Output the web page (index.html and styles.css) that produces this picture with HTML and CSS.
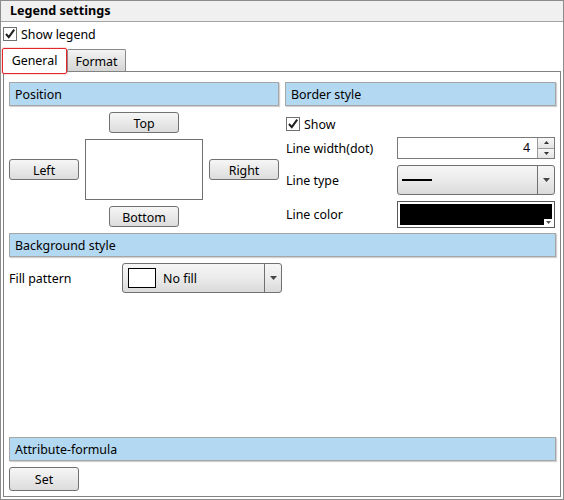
FILE: index.html
```html
<!DOCTYPE html>
<html>
<head>
<meta charset="utf-8">
<link rel="stylesheet" href="styles.css">
</head>
<body>
<div class="window">
  <div class="title">Legend settings</div>
  <div class="check show-legend">
    <svg class="cb" width="14" height="14" viewBox="0 0 14 14"><rect x="0.5" y="0.5" width="13" height="13" fill="#fff" stroke="#707070"/><path d="M3 7 L5.8 10.2 L11.2 2.6" fill="none" stroke="#1e1e1e" stroke-width="2"/></svg>
    <span>Show legend</span>
  </div>
  <div class="tabs">
    <div class="tab selected">General</div>
    <div class="tab">Format</div>
  </div>
  <div class="panel">
    <div class="columns">
      <section class="col">
        <div class="hdr">Position</div>
        <div class="pos">
          <div class="btn">Top</div>
          <div class="pos-mid">
            <div class="btn">Left</div>
            <div class="preview"></div>
            <div class="btn">Right</div>
          </div>
          <div class="btn">Bottom</div>
        </div>
      </section>
      <section class="col col-right">
        <div class="hdr">Border style</div>
        <div class="check show-row">
          <svg class="cb" width="14" height="14" viewBox="0 0 14 14"><rect x="0.5" y="0.5" width="13" height="13" fill="#fff" stroke="#707070"/><path d="M3 7 L5.8 10.2 L11.2 2.6" fill="none" stroke="#1e1e1e" stroke-width="2"/></svg>
          <span>Show</span>
        </div>
        <div class="form">
          <div class="lbl">Line width(dot)</div>
          <div class="spin">
            <div class="spin-val">4</div>
            <div class="spin-btns">
              <div class="spin-btn"><svg width="5" height="3" viewBox="0 0 5 3"><path d="M0 3h5L2.5 0z" fill="#333"/></svg></div>
              <div class="spin-btn"><svg width="5" height="3" viewBox="0 0 5 3"><path d="M0 0h5L2.5 3z" fill="#333"/></svg></div>
            </div>
          </div>
          <div class="lbl">Line type</div>
          <div class="drop drop-line">
            <div class="drop-body"><div class="line-sample"></div></div>
            <div class="drop-arrow"><svg width="7" height="4" viewBox="0 0 7 4"><path d="M0 0h7L3.5 4z" fill="#444"/></svg></div>
          </div>
          <div class="lbl">Line color</div>
          <div class="color">
            <div class="color-fill"></div>
            <div class="color-arrow"><svg width="5" height="3" viewBox="0 0 5 3"><path d="M0 0h5L2.5 3z" fill="#555"/></svg></div>
          </div>
        </div>
      </section>
    </div>
    <div class="hdr hdr-bg">Background style</div>
    <div class="fill-row">
      <div class="lbl fill-lbl">Fill pattern</div>
      <div class="drop drop-fill">
        <div class="drop-body"><div class="swatch"></div><span class="fill-text">No fill</span></div>
        <div class="drop-arrow"><svg width="7" height="4" viewBox="0 0 7 4"><path d="M0 0h7L3.5 4z" fill="#444"/></svg></div>
      </div>
    </div>
    <div class="hdr hdr-attr">Attribute-formula</div>
    <div class="btn btn-set">Set</div>
  </div>
</div>
</body>
</html>
```
FILE: styles.css
```css
* { box-sizing: border-box; }
html, body { margin: 0; padding: 0; background: #fff; }
body {
  font-family: "Noto Sans", "DejaVu Sans", sans-serif;
  font-size: 12.4px;
  color: #000;
}
.window {
  width: 564px;
  height: 500px;
  border: 1px solid #8c8c8c;
  display: flex;
  flex-direction: column;
}
.title {
  flex: none;
  height: 21px;
  background: #f0f0f0;
  border-bottom: 1px solid #a3a3a3;
  font-weight: bold;
  font-size: 12.6px;
  padding-left: 9px;
  line-height: 20px;
}
.check { display: flex; align-items: center; gap: 4px; }
.cb { flex: none; display: block; }
.show-legend { flex: none; height: 20px; margin-top: 2px; padding-left: 2px; }
.tabs {
  flex: none;
  display: flex;
  align-items: flex-end;
  height: 23px;
  margin-top: 4px;
  padding-left: 1px;
}
.tab {
  height: 22px;
  width: 59px;
  display: flex;
  align-items: center;
  justify-content: center;
  border: 1px solid #8a8a8a;
  border-bottom: none;
  border-radius: 2px 2px 0 0;
  background: linear-gradient(#f3f3f3, #d5d5d5);
  padding-top: 1px;
}
.tab.selected {
  position: relative;
  z-index: 1;
  width: 65px;
  height: 26px;
  margin-bottom: -3px;
  border: 1px solid #e3262b;
  border-radius: 2px;
  background: #fff;
  padding-top: 0;
  padding-bottom: 2px;
  box-shadow: 0 0 0 1px rgba(240, 80, 80, 0.18);
}
.panel {
  flex: 1;
  margin: 0 2px 2px 2px;
  border: 1px solid #828282;
  padding: 10px 4px 5px 5px;
  display: flex;
  flex-direction: column;
}
.columns {
  display: grid;
  grid-template-columns: 270px 1fr;
  column-gap: 6px;
}
.hdr {
  flex: none;
  height: 24px;
  line-height: 23px;
  padding-left: 5px;
  background: #b3d8f1;
  border: 1px solid #a6a6a6;
  box-shadow: 1px 1px 1px rgba(0, 0, 0, 0.18);
}
.pos {
  display: flex;
  flex-direction: column;
  align-items: center;
  gap: 6px;
  margin-top: 6px;
}
.pos-mid {
  display: flex;
  align-items: center;
  gap: 6px;
  width: 100%;
}
.btn {
  width: 70px;
  height: 21px;
  border: 1px solid #707070;
  border-radius: 3px;
  background: linear-gradient(#f6f6f6, #dcdcdc);
  display: flex;
  align-items: center;
  justify-content: center;
  flex: none;
  padding-top: 1px;
}
.preview {
  width: 118px;
  height: 61px;
  border: 1px solid #707070;
  background: #fff;
}
.col-right { padding-left: 0; }
.show-row { height: 18px; margin-top: 9px; padding-left: 1px; }
.form {
  display: grid;
  grid-template-columns: 112px 158px;
  grid-template-rows: 22px 30px 27px;
  row-gap: 6px;
  margin-top: 4px;
  align-items: center;
}
.lbl { padding-left: 1px; white-space: nowrap; }
.spin {
  height: 22px;
  display: flex;
  border: 1px solid #7a7a7a;
  background: #fff;
}
.spin-val { flex: 1; text-align: right; padding-right: 7px; line-height: 20px; }
.spin-btns {
  width: 17px;
  border-left: 1px solid #9a9a9a;
  display: flex;
  flex-direction: column;
}
.spin-btn {
  flex: 1;
  display: flex;
  align-items: center;
  justify-content: center;
  background: linear-gradient(#f7f7f7, #e3e3e3);
}
.spin-btn + .spin-btn { border-top: 1px solid #9a9a9a; }
.spin-btn svg { display: block; }
.drop {
  display: flex;
  border: 1px solid #707070;
  border-radius: 3px;
  background: linear-gradient(#f6f6f6 0%, #ebebeb 50%, #dadada 100%);
}
.drop-line { height: 30px; }
.drop-body { flex: 1; display: flex; align-items: center; padding-left: 4px; }
.drop-arrow {
  width: 17px;
  border-left: 1px solid #707070;
  display: flex;
  align-items: center;
  justify-content: center;
}
.drop-arrow svg { display: block; }
.line-sample { width: 30px; height: 2px; background: #000; }
.color {
  height: 27px;
  border: 1px solid #5a5a5a;
  padding: 2px;
  background: #fff;
  position: relative;
}
.color-fill { width: 100%; height: 100%; background: #000; }
.color-arrow {
  position: absolute;
  right: 2px;
  bottom: 2px;
  width: 8px;
  height: 6px;
  background: #fff;
  display: flex;
  align-items: center;
  justify-content: center;
}
.color-arrow svg { display: block; }
.hdr-bg { margin-top: 5px; }
.fill-row { display: flex; align-items: center; margin-top: 6px; }
.fill-lbl { width: 113px; padding-left: 0; }
.drop-fill { width: 160px; height: 30px; }
.drop-fill .drop-body { padding-left: 5px; }
.swatch { width: 28px; height: 20px; border: 1px solid #000; background: #fff; flex: none; }
.fill-text { margin-left: 7px; }
.hdr-attr { margin-top: auto; }
.btn-set { height: 24px; margin-top: 6px; }
```
